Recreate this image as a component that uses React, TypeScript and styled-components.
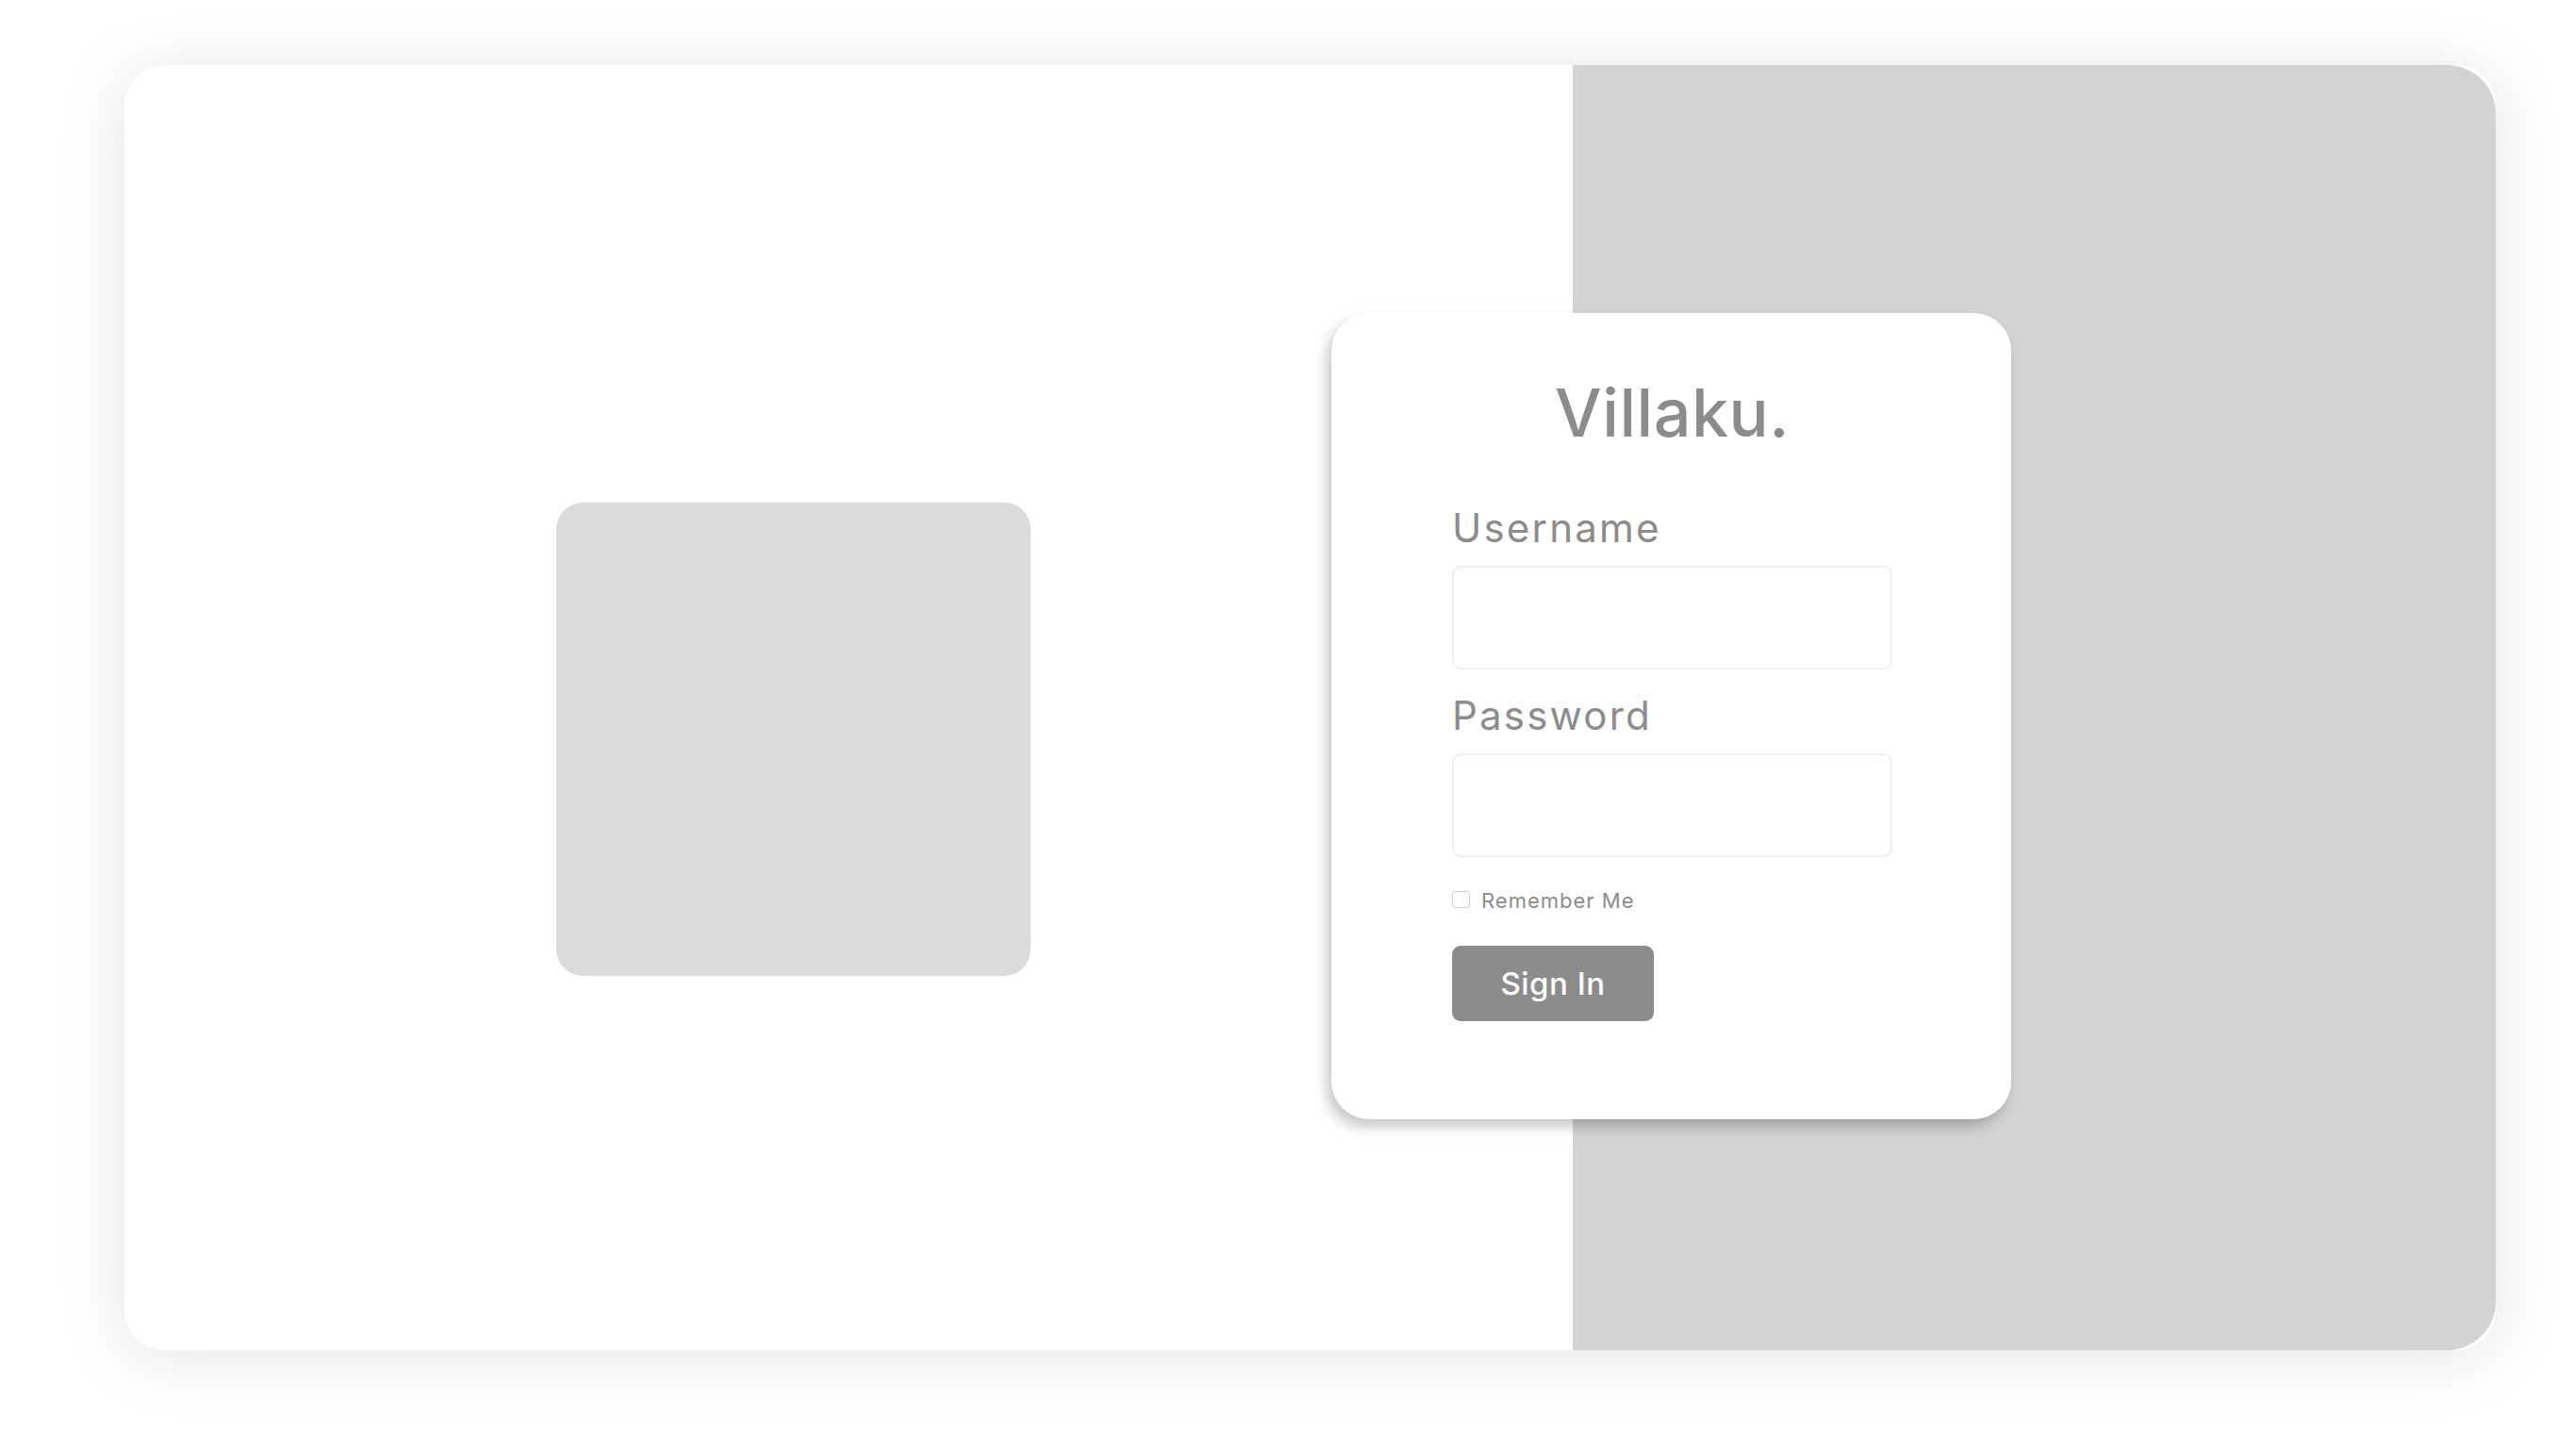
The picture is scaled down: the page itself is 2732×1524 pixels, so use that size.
import React from "react";
import styled, { createGlobalStyle } from "styled-components";

const GlobalStyle = createGlobalStyle`
  html, body {
    margin: 0;
    padding: 0;
    background: #ffffff;
  }
  body {
    width: 2732px;
    height: 1524px;
    overflow: hidden;
    font-family: "Inter", "Noto Sans", sans-serif;
  }
  * {
    box-sizing: border-box;
  }
`;

const Page = styled.div`
  width: 2732px;
  height: 1524px;
  padding: 69px 0 0 132px;
`;

const Frame = styled.div`
  width: 2515px;
  height: 1363px;
  display: grid;
  grid-template-columns: 1280px 256px 465px 1fr;
  grid-template-rows: 1fr;
  background: #ffffff;
  border-radius: 42px;
  box-shadow: 0 6px 70px rgba(0, 0, 0, 0.11);
`;

const WhitePane = styled.div`
  grid-column: 1 / 3;
  grid-row: 1;
  display: flex;
  align-items: flex-start;
  padding: 464px 0 0 458px;
`;

const Placeholder = styled.div`
  width: 503px;
  height: 502px;
  background: #dbdbdb;
  border-radius: 28px;
`;

const GrayPane = styled.div`
  grid-column: 3 / 5;
  grid-row: 1;
  background: #d3d3d3;
  border-radius: 0 52px 52px 0;
`;

const LoginCard = styled.div`
  grid-column: 2 / 4;
  grid-row: 1;
  align-self: start;
  margin-top: 263px;
  position: relative;
  z-index: 1;
  background: #ffffff;
  border-radius: 40px;
  box-shadow: -5px 8px 14px rgba(0, 0, 0, 0.22);
  padding: 71px 126px 104px 128px;
  display: flex;
  flex-direction: column;
`;

const Title = styled.h1`
  margin: 0;
  font-size: 70px;
  line-height: 70px;
  font-weight: 500;
  color: #8c8c8c;
  text-align: center;
  letter-spacing: 0.5px;
`;

const Field = styled.div<{ $gap: number }>`
  display: flex;
  flex-direction: column;
  gap: 19px;
  margin-top: ${(p) => p.$gap}px;
`;

const Label = styled.label`
  font-size: 42px;
  line-height: 42px;
  font-weight: 400;
  color: #8c8c8c;
  letter-spacing: 2.2px;
`;

const Input = styled.input`
  width: 467px;
  height: 110px;
  border: 2px solid #efefef;
  border-radius: 9px;
  background: #ffffff;
  outline: none;
  padding: 0 20px;
  font-size: 30px;
  font-family: inherit;
  color: #8c8c8c;
`;

const RememberRow = styled.label`
  display: flex;
  align-items: flex-start;
  gap: 12px;
  margin-top: 35px;
`;

const Box = styled.span`
  width: 19px;
  height: 18px;
  margin-top: 1px;
  border: 1.5px solid #cfcfcf;
  border-radius: 3px;
  background: #ffffff;
`;

const RememberText = styled.span`
  font-size: 22px;
  line-height: 22px;
  color: #8c8c8c;
  letter-spacing: 1px;
`;

const SignInButton = styled.button`
  margin-top: 37px;
  width: 214px;
  height: 80px;
  border: none;
  border-radius: 9px;
  background: #8c8c8c;
  color: #ffffff;
  font-family: inherit;
  font-size: 33px;
  font-weight: 500;
  letter-spacing: 0.5px;
  cursor: pointer;
`;

const App: React.FC = () => {
  return (
    <>
      <GlobalStyle />
      <Page>
        <Frame>
          <WhitePane>
            <Placeholder />
          </WhitePane>
          <GrayPane />
          <LoginCard>
            <Title>Villaku.</Title>
            <Field $gap={66}>
              <Label htmlFor="username">Username</Label>
              <Input id="username" type="text" />
            </Field>
            <Field $gap={28}>
              <Label htmlFor="password">Password</Label>
              <Input id="password" type="password" />
            </Field>
            <RememberRow>
              <Box />
              <RememberText>Remember Me</RememberText>
            </RememberRow>
            <SignInButton>Sign In</SignInButton>
          </LoginCard>
        </Frame>
      </Page>
    </>
  );
};

export default App;
